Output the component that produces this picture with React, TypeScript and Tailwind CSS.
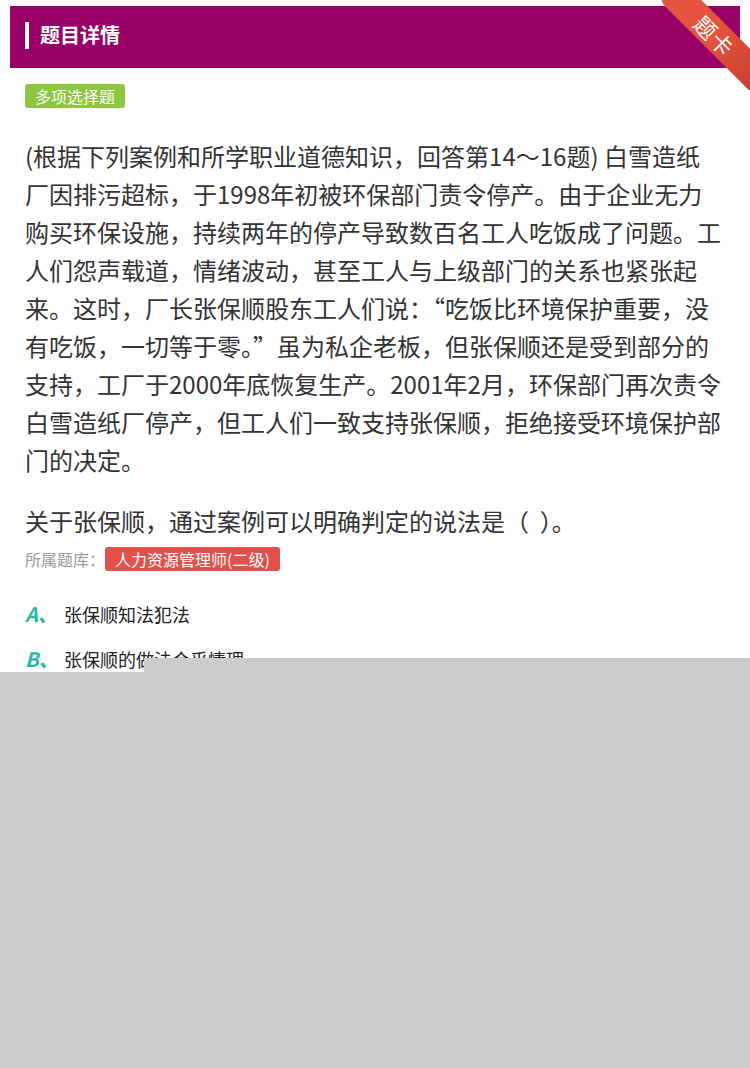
import React from "react";

const paragraph = [
  "(根据下列案例和所学职业道德知识，回答第14～16题) 白雪造纸",
  "厂因排污超标，于1998年初被环保部门责令停产。由于企业无力",
  "购买环保设施，持续两年的停产导致数百名工人吃饭成了问题。工",
  "人们怨声载道，情绪波动，甚至工人与上级部门的关系也紧张起",
  "来。这时，厂长张保顺股东工人们说：“吃饭比环境保护重要，没",
  "有吃饭，一切等于零。”虽为私企老板，但张保顺还是受到部分的",
  "支持，工厂于2000年底恢复生产。2001年2月，环保部门再次责令",
  "白雪造纸厂停产，但工人们一致支持张保顺，拒绝接受环境保护部",
  "门的决定。",
];

const options = [
  { key: "A", text: "张保顺知法犯法" },
  { key: "B", text: "张保顺的做法合乎情理" },
];

function Ribbon() {
  return (
    <div className="absolute right-0 top-0 w-[100px] h-[90px] overflow-hidden pointer-events-none">
      <div className="absolute left-[-5px] top-[20px] w-[140px] h-[30px] rotate-45 bg-gradient-to-r from-[#e4533e] via-[#e4533e] to-[#c53e2e] flex items-center justify-center rounded-l-[15px]">
        <span className="text-white text-[22px] leading-none tracking-[1px]">题卡</span>
      </div>
    </div>
  );
}

export default function App() {
  return (
    <div
      className="relative w-[750px] h-[1068px] bg-white overflow-hidden"
      style={{ fontFamily: '"Noto Sans CJK SC", "Noto Sans", sans-serif' }}
    >
      {/* header */}
      <div className="pt-[6px] px-[10px]">
        <div className="h-[62px] bg-[#990066] flex items-center pl-[15px] pb-[4px]">
          <div className="w-[4px] h-[27px] bg-white mr-[11px]" />
          <h1 className="text-white text-[20px] font-bold">题目详情</h1>
        </div>
      </div>
      <Ribbon />

      <div className="px-[25px]">
        <div className="mt-[16px] flex">
          <span className="h-[24px] px-[10px] rounded-[3px] bg-[#8dc63f] text-white text-[16px] leading-[24px]">
            多项选择题
          </span>
        </div>

        <div className="mt-[29px] text-[24px] leading-[38px] text-[#333333]">
          {paragraph.map((line, i) => (
            <div key={i} className="whitespace-nowrap">
              {line}
            </div>
          ))}
        </div>

        <div className="mt-[23px] text-[24px] leading-[38px] text-[#333333] whitespace-pre">
          关于张保顺，通过案例可以明确判定的说法是（  ）。
        </div>

        <div className="mt-[7px] flex items-center h-[24px]">
          <span className="text-[16px] text-[#999999]">所属题库：</span>
          <span className="h-[24px] px-[10px] rounded-[3px] bg-[#e2504b] text-white text-[16px] leading-[24px]">
            人力资源管理师(二级)
          </span>
        </div>

        <div className="mt-[31px] flex flex-col gap-[21px]">
          {options.map((o) => (
            <div key={o.key} className="flex items-center h-[24px]">
              <span className="w-[39px] text-[20px] font-bold italic text-[#2bb6a6]">
                {o.key}、
              </span>
              <span className="text-[18px] text-[#222222]">{o.text}</span>
            </div>
          ))}
        </div>
      </div>

      {/* grey overlay */}
      <div className="absolute left-[144px] right-0 top-[658px] h-[14px] bg-[#cccccc]" />
      <div className="absolute left-0 right-0 top-[672px] bottom-0 bg-[#cccccc]" />
    </div>
  );
}
